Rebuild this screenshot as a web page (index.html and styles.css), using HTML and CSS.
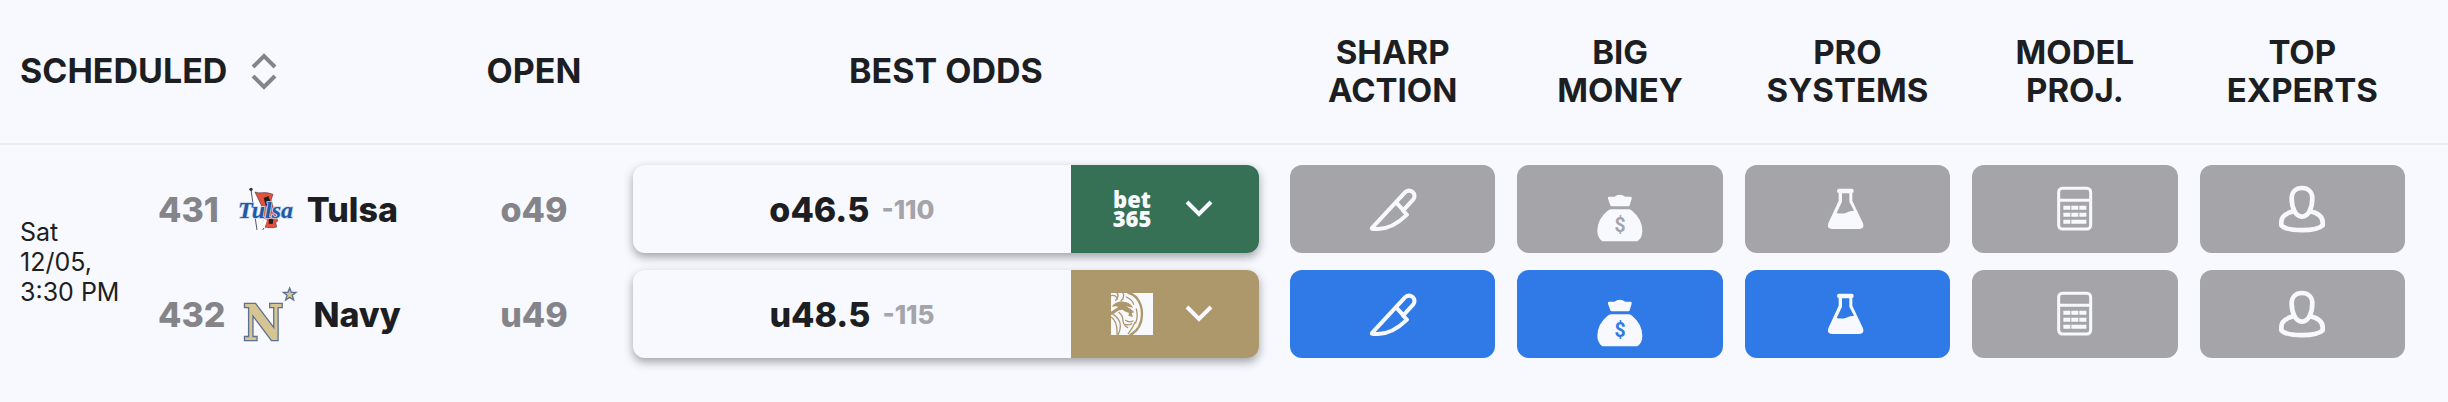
FILE: index.html
```html
<!DOCTYPE html>
<html lang="en">
<head>
<meta charset="utf-8">
<meta name="viewport" content="width=device-width, initial-scale=1">
<title>Best odds</title>
<link rel="stylesheet" href="styles.css">
</head>
<body>
<svg class="sprite" aria-hidden="true">
  <symbol id="knife" viewBox="37 27 180 180">
    <path class="line" stroke-width="12" d="M65 173 163 67Q175 57 186 66Q196 76 188 88L157 122L169 134Q124 178 80 177Q58 178 65 173ZM137 98 159 122"/>
  </symbol>
  <symbol id="bag" viewBox="28 29 180 180">
    <path fill="currentColor" d="M84 82H101Q117 70 134 82H151Q154 83 153 88L147 108Q146 111 143 111H93Q90 111 89 108L82 88Q81 83 84 82ZM91 120H145Q150 120 155 125Q185 150 185 184Q185 205 172 214Q170 216 165 216H70Q65 216 63 214Q50 203 50 184Q50 150 80 125Q86 120 91 120Z"/>
    <text class="dollar" x="118" y="189" text-anchor="middle">$</text>
  </symbol>
  <symbol id="flask" viewBox="52 29 180 180">
    <path fill="currentColor" fill-rule="evenodd" d="M118 58H156Q162 58 162 64Q162 71 158 71V94L190 162Q195 179 179 179H97Q81 179 86 162L117 94V71Q112 71 112 64Q112 58 118 58ZM127 72V97L111 131Q127 135 140 130Q151 124 163 124L149 97V72Z"/>
  </symbol>
  <symbol id="calc" viewBox="47 28 180 180">
    <rect class="line" stroke-width="9" x="88" y="56" width="96" height="122" rx="11"/>
    <path fill="currentColor" d="M88 87h96v9H88ZM102 108h21v12h-21ZM126 108h21v12h-21ZM150 108h21v12h-21ZM102 129h21v12h-21ZM126 129h21v12h-21ZM150 129h21v12h-21ZM102 150h21v12h-21ZM126 150h45v12h-45Z"/>
  </symbol>
  <symbol id="expert" viewBox="39 28 180 180">
    <path class="line" stroke-width="14" d="M129 55C148 55 160 67 160 86C160 115 148 141 129 141C110 141 98 115 98 86C98 67 110 55 129 55Z"/>
    <path class="line" stroke-width="14" d="M104 125C78 131 67 144 67 158V167C85 186 173 186 191 167V158C191 144 180 131 154 125"/>
  </symbol>
  <symbol id="chevron" viewBox="0 0 28 18">
    <path fill="none" stroke="currentColor" stroke-width="4" d="M2 2 14 14 26 2"/>
  </symbol>
</svg>

<table class="odds">
  <colgroup>
    <col class="col-date"><col class="col-team"><col class="col-open"><col>
    <col class="col-signal"><col class="col-signal"><col class="col-signal"><col class="col-signal"><col class="col-signal">
    <col class="col-end">
  </colgroup>
  <thead>
    <tr>
      <th class="wide scheduled" colspan="2" scope="col">
        <button class="sort" type="button">SCHEDULED
          <svg class="sort-icon" viewBox="0 0 26 38" aria-hidden="true"><path fill="none" stroke="currentColor" stroke-width="4" d="M2 15 13 4 24 15M2 24 13 35 24 24"/></svg>
        </button>
      </th>
      <th class="wide" scope="col">OPEN</th>
      <th class="wide" scope="col">BEST ODDS</th>
      <th scope="col">SHARP<br>ACTION</th>
      <th scope="col">BIG<br>MONEY</th>
      <th scope="col">PRO<br>SYSTEMS</th>
      <th scope="col">MODEL<br>PROJ.</th>
      <th scope="col">TOP<br>EXPERTS</th>
      <td></td>
    </tr>
  </thead>
  <tbody>
    <tr class="first">
      <td class="date" rowspan="2">Sat<br>12/05,<br>3:30&nbsp;PM</td>
      <td>
        <div class="team">
          <span class="rotation">431</span>
          <svg class="team-logo" viewBox="28 5 168 168" aria-hidden="true">
            <path fill="#e2523f" stroke="#5b3a38" stroke-width="2" d="M88 38Q98 42 110 40Q124 38 142 45L136 62L144 88L152 112L156 125L150 130L153 143Q140 147 114 143L116 120L108 80Z"/>
            <path fill="#231f20" d="M114 56 128 50 136 70 128 84 120 78ZM130 118 143 120 141 134 129 133Z"/>
            <path fill="none" stroke="#fff" stroke-width="9" d="M84 50 96 152M120 120 110 152"/>
            <path fill="none" stroke="#55565c" stroke-width="3" d="M76 32 94 152M115 146 111 152"/>
            <circle cx="76" cy="30" r="5" fill="#333"/>
            <text class="script-mark" x="37" y="117">Tulsa</text>
          </svg>
          <span class="name">Tulsa</span>
        </div>
      </td>
      <td class="open">o49</td>
      <td>
        <button class="best" type="button">
          <span class="line-price"><span class="total">o46.5</span> <span class="price">-110</span></span>
          <span class="book bet365"><span class="bet-logo">bet<br>365</span><svg class="chevron"><use href="#chevron"/></svg></span>
        </button>
      </td>
      <td class="signal-cell"><button class="signal" type="button" aria-label="Sharp action"><svg><use href="#knife"/></svg></button></td>
      <td class="signal-cell"><button class="signal" type="button" aria-label="Big money"><svg><use href="#bag"/></svg></button></td>
      <td class="signal-cell"><button class="signal" type="button" aria-label="Pro systems"><svg><use href="#flask"/></svg></button></td>
      <td class="signal-cell"><button class="signal" type="button" aria-label="Model projection"><svg><use href="#calc"/></svg></button></td>
      <td class="signal-cell"><button class="signal" type="button" aria-label="Top experts"><svg><use href="#expert"/></svg></button></td>
      <td></td>
    </tr>
    <tr class="last">
      <td>
        <div class="team">
          <span class="rotation">432</span>
          <svg class="team-logo" viewBox="36 21 168 168" aria-hidden="true">
            <text class="block-mark" x="103" y="183" text-anchor="middle">N</text>
            <path fill="#d5c592" stroke="#5d7092" stroke-width="4" d="M182 27 187 40 201 40 190 49 194 63 182 55 170 63 174 49 163 40 177 40Z"/>
          </svg>
          <span class="name">Navy</span>
        </div>
      </td>
      <td class="open">u49</td>
      <td>
        <button class="best" type="button">
          <span class="line-price"><span class="total">u48.5</span> <span class="price">-115</span></span>
          <span class="book mgm">
            <svg class="lion" viewBox="0 0 126 126" aria-hidden="true">
              <path fill="#f8f9ff" d="M0 0h126v126H0Z"/>
              <g fill="none" stroke="#ad986c" stroke-linecap="round">
                <path stroke-width="7" d="M52 0C78 4 93 34 93 63C93 92 80 114 58 126"/>
                <path stroke-width="4" d="M18 0Q26 10 14 22M0 8Q14 4 19 18M36 0Q42 12 30 24M46 12Q64 20 68 34M76 48Q82 70 74 90M72 88Q66 104 52 122M0 72Q20 84 18 124M4 62Q28 78 28 98Q28 112 22 124M24 58Q36 68 36 84Q38 98 50 104M44 82Q54 90 66 84M44 94Q54 98 62 92"/>
              </g>
              <path fill="#ad986c" d="M4 38Q22 20 46 28Q60 32 66 44L46 40Q58 46 70 58L62 60 66 72 52 68 54 60Q40 56 34 50Q22 50 12 60L0 66V56Q10 50 22 42Q12 38 4 42Z"/>
            </svg>
            <svg class="chevron"><use href="#chevron"/></svg></span>
        </button>
      </td>
      <td class="signal-cell"><button class="signal on" type="button" aria-label="Sharp action"><svg><use href="#knife"/></svg></button></td>
      <td class="signal-cell"><button class="signal on" type="button" aria-label="Big money"><svg><use href="#bag"/></svg></button></td>
      <td class="signal-cell"><button class="signal on" type="button" aria-label="Pro systems"><svg><use href="#flask"/></svg></button></td>
      <td class="signal-cell"><button class="signal" type="button" aria-label="Model projection"><svg><use href="#calc"/></svg></button></td>
      <td class="signal-cell"><button class="signal" type="button" aria-label="Top experts"><svg><use href="#expert"/></svg></button></td>
      <td></td>
    </tr>
  </tbody>
</table>
</body>
</html>
```
FILE: styles.css
```css
body {
  margin: 0;
  background: #f7f9fe;
  color: #1d1e22;
  font-family: Inter, "Liberation Sans", sans-serif;
}
button {
  margin: 0;
  padding: 0;
  border: 0;
  background: none;
  color: inherit;
  font: inherit;
  cursor: pointer;
}
.sprite { display: none; }
.line {
  fill: none;
  stroke: currentColor;
  stroke-linejoin: round;
  stroke-linecap: round;
}
.odds {
  width: 100%;
  table-layout: fixed;
  border-spacing: 0;
}
.col-date { width: 155px; }
.col-team { width: 300px; }
.col-open { width: 158px; }
.col-signal { width: 9.29%; }
.col-end { width: 32px; }
td { padding: 0; }
thead th, thead td {
  height: 141px;
  padding: 0 0 2px;
  border-bottom: 2px solid #ecedf1;
  box-sizing: content-box;
  font-size: 33px;
  font-weight: 700;
  line-height: 38px;
  text-align: center;
}
thead th.wide { font-size: 34px; }
thead th.scheduled {
  padding-left: 20px;
  text-align: left;
}
.sort {
  display: flex;
  align-items: center;
  gap: 24px;
}
.sort-icon {
  width: 26px;
  height: 38px;
  color: #858489;
}
.first td { padding-top: 20px; padding-bottom: 8px; }
.last td { padding-top: 9px; padding-bottom: 19px; }
tbody td.date {
  padding: 2px 0 0 20px;
  font-size: 25px;
  line-height: 30px;
}
.team {
  display: flex;
  align-items: center;
  gap: 16px;
  padding-left: 3px;
  font-size: 34px;
  font-weight: 800;
}
.rotation, .open { color: #858489; }
.team-logo {
  width: 56px;
  height: 56px;
  overflow: visible;
}
.script-mark {
  font: italic 700 72px "Liberation Serif", serif;
  fill: #1f5aa6;
  stroke: #c9d8ee;
  stroke-width: 5px;
  paint-order: stroke;
}
.block-mark {
  font: 700 146px "DejaVu Serif Condensed", "DejaVu Serif", serif;
  fill: #d5c592;
  stroke: #5d7092;
  stroke-width: 8px;
  paint-order: stroke;
}
.open {
  font-size: 34px;
  font-weight: 800;
  text-align: center;
}
.best {
  display: flex;
  width: calc(100% - 40px);
  height: 88px;
  margin: 0 20px;
  border-radius: 12px;
  box-shadow: 0 4px 10px rgba(29, 30, 34, 0.4);
  overflow: hidden;
  background: #f8f9ff;
}
.line-price {
  flex: 1;
  display: flex;
  align-items: center;
  justify-content: center;
  gap: 12px;
  font-weight: 800;
}
.total { font-size: 34px; }
.price { font-size: 26px; color: #a5a4a9; }
.book {
  display: flex;
  align-items: center;
  gap: 32px;
  padding: 0 46px 0 40px;
  color: #f8f9ff;
}
.bet365 { background: #367156; }
.mgm { background: #ad986c; }
.bet-logo {
  width: 42px;
  font: 800 22px/19px "Open Sans", "Noto Sans", sans-serif;
  text-align: center;
}
.lion {
  width: 42px;
  height: 42px;
}
.chevron {
  width: 28px;
  height: 18px;
}
.signal {
  display: flex;
  align-items: center;
  justify-content: center;
  width: calc(100% - 22px);
  height: 88px;
  margin: 0 11px;
  border-radius: 12px;
  background: #a5a4a9;
  color: #f8f9ff;
  --tile: #a5a4a9;
}
.signal.on {
  background: #307ae8;
  --tile: #307ae8;
}
.signal svg {
  width: 60px;
  height: 60px;
  overflow: visible;
}
symbol { overflow: visible; }
.dollar {
  font: 700 58px Roboto, sans-serif;
  fill: var(--tile);
}
```
